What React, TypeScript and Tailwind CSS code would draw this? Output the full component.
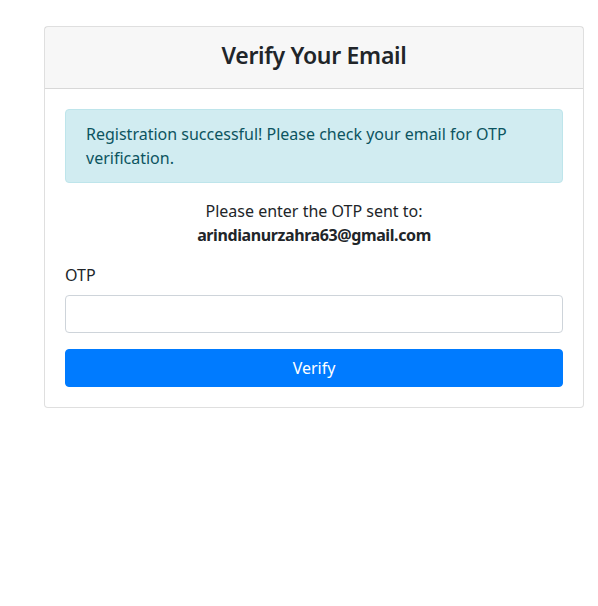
export default function App() {
  return (
    <div
      className="min-h-screen bg-white pt-[26px] pl-[44px] text-[#212529]"
      style={{ fontFamily: '"Noto Sans", "Open Sans", sans-serif' }}
    >
      <div className="w-[540px] rounded border border-black/[0.125] bg-white">
        <div className="border-b border-black/[0.125] bg-black/[0.03] px-5 pt-[14px] pb-[18px]">
          <h4 className="text-center text-[23px] leading-[28.8px] font-semibold tracking-[-0.3px]">
            Verify Your Email
          </h4>
        </div>
        <div className="p-5">
          <div className="mb-4 rounded border border-[#bee5eb] bg-[#d1ecf1] px-5 py-3 text-base leading-6 text-[#0c5460]">
            Registration successful! Please check your email for OTP
            verification.
          </div>
          <p className="mb-4 text-center text-base leading-6">
            Please enter the OTP sent to:
            <br />
            <strong className="font-bold tracking-[-0.4px]">
              arindianurzahra63@gmail.com
            </strong>
          </p>
          <div className="mb-4">
            <label className="mb-2 block text-base leading-6">OTP</label>
            <input
              type="text"
              className="block h-[38px] w-full rounded border border-[#ced4da] bg-white px-3 text-base outline-none"
            />
          </div>
          <button className="block h-[38px] w-full rounded border border-[#007bff] bg-[#007bff] text-base leading-6 text-white">
            Verify
          </button>
        </div>
      </div>
    </div>
  );
}
